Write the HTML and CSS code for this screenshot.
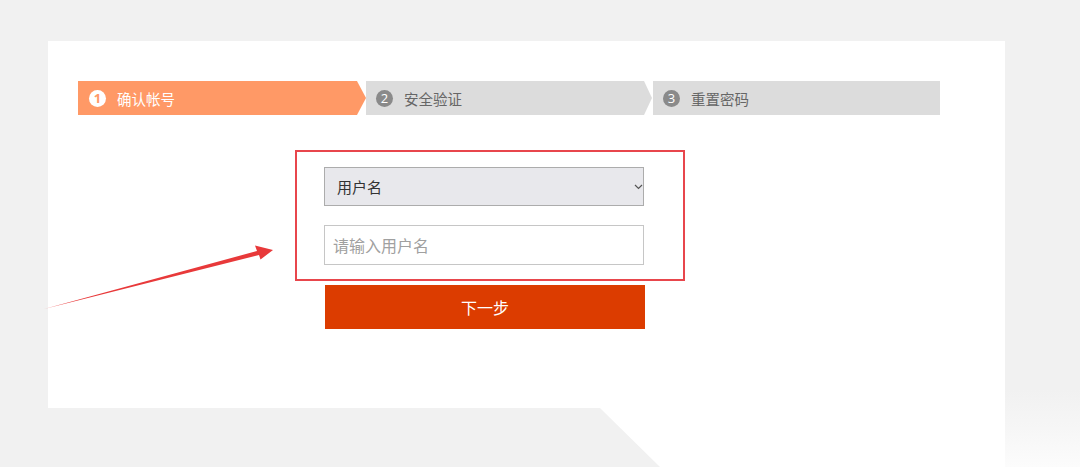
FILE: index.html
```html
<!DOCTYPE html>
<html lang="zh-CN">
<head>
<meta charset="utf-8">
<title>找回密码</title>
<link rel="stylesheet" href="styles.css">
</head>
<body>
<div class="stage">
  <div class="panel">
    <div class="steps">
      <div class="step step-active step-first"><span class="num">1</span><span class="label">确认帐号</span></div>
      <div class="step step-mid"><span class="num">2</span><span class="label">安全验证</span></div>
      <div class="step step-last"><span class="num">3</span><span class="label">重置密码</span></div>
    </div>
    <div class="form-area">
      <div class="red-box">
        <div class="select">
          <span>用户名</span>
          <svg class="chev" width="9" height="6" viewBox="0 0 9 6"><path d="M1 1 L4.5 4.5 L8 1" fill="none" stroke="#555" stroke-width="1.2"/></svg>
        </div>
        <div class="input"><span class="ph">请输入用户名</span></div>
      </div>
      <div class="btn">下一步</div>
    </div>
  </div>
  <div class="bottom-fade"></div>
  <div class="right-fade"></div>
  <svg class="arrow" width="1080" height="467" viewBox="0 0 1080 467">
    <path d="M44 309 L257 251 L255 245.5 L273 250 L260.5 259.5 L259 255 Z" fill="#e8393a"/>
  </svg>
</div>
</body>
</html>
```

FILE: styles.css
```css
html, body {
  margin: 0;
  padding: 0;
  background: #f1f1f1;
  font-family: "Noto Sans CJK SC", "Microsoft YaHei", sans-serif;
}
.stage {
  position: relative;
  width: 1080px;
  height: 467px;
  overflow: hidden;
  padding-top: 41px;
  box-sizing: border-box;
}
.panel {
  margin-left: 48px;
  width: 957px;
  height: 367px;
  background: #fff;
  padding: 40px 0 0 30px;
  box-sizing: border-box;
}
.steps {
  display: flex;
  width: 862px;
  height: 34px;
}
.step {
  display: flex;
  align-items: center;
  height: 34px;
  background: #dcdcdc;
  color: #666;
  font-size: 14px;
  box-sizing: border-box;
}
.step-first {
  width: 288px;
  padding-left: 11px;
  clip-path: polygon(0 0, 279px 0, 288px 50%, 279px 100%, 0 100%);
}
.step-mid {
  width: 286px;
  padding-left: 10px;
  clip-path: polygon(0 0, 278px 0, 286px 50%, 278px 100%, 0 100%);
}
.step-last {
  flex: 1;
  margin-left: 1px;
  padding-left: 10px;
}
.step-active {
  background: #ff9966;
  color: #fff;
}
.num {
  width: 17px;
  height: 17px;
  border-radius: 50%;
  background: #8a8a8a;
  color: #fff;
  font-size: 13px;
  line-height: 17px;
  text-align: center;
  font-family: "Open Sans", "Liberation Sans", sans-serif;
  margin-right: 11px;
}
.step-active .num {
  background: #fff;
  color: #ff9966;
  font-weight: bold;
}
.label { font-size: 14.5px; }
.form-area {
  margin-left: 217px;
  margin-top: 35px;
  width: 390px;
}
.red-box {
  width: 390px;
  height: 131px;
  border: 2px solid #e8464c;
  box-sizing: border-box;
  padding: 15px 0 0 27px;
}
.select {
  width: 320px;
  height: 39px;
  background: #e8e8ec;
  border: 1px solid #acacac;
  box-sizing: border-box;
  display: flex;
  align-items: center;
  justify-content: space-between;
  padding: 0 0 0 12px;
  font-size: 15px;
  color: #333;
}
.input {
  margin-top: 19px;
  width: 320px;
  height: 40px;
  border: 1px solid #c6c6c6;
  box-sizing: border-box;
  display: flex;
  align-items: center;
  padding-left: 8px;
  font-size: 16px;
}
.ph { color: #a0a0a0; }
.btn {
  margin-top: 4px;
  margin-left: 30px;
  width: 320px;
  height: 44px;
  background: #dc3c00;
  color: #fff;
  font-size: 16px;
  display: flex;
  align-items: center;
  justify-content: center;
}
.bottom-fade {
  position: absolute;
  left: 560px;
  top: 408px;
  width: 445px;
  height: 59px;
  background: #fff;
  clip-path: polygon(40px 0, 445px 0, 445px 59px, 100px 59px);
}
.right-fade {
  position: absolute;
  left: 1005px;
  top: 390px;
  width: 75px;
  height: 77px;
  background: linear-gradient(to bottom, #f1f1f1 0%, #f6f6f6 50%, #fcfcfc 100%);
}
.arrow {
  position: absolute;
  left: 0;
  top: 0;
  pointer-events: none;
}
```
